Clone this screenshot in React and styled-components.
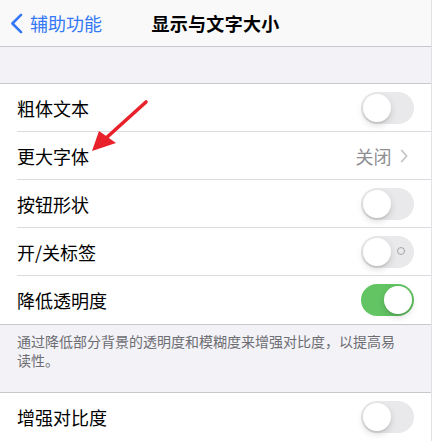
import React from "react";
import styled, { createGlobalStyle } from "styled-components";

const GlobalStyle = createGlobalStyle`
  html, body {
    margin: 0;
    padding: 0;
    background: #ffffff;
  }
  body {
    font-family: "Noto Sans CJK SC", "Noto Sans", "Liberation Sans", sans-serif;
    -webkit-font-smoothing: antialiased;
  }
`;

const rows = [
  { label: "粗体文本", type: "toggle", on: false },
  { label: "更大字体", type: "link", value: "关闭" },
  { label: "按钮形状", type: "toggle", on: false },
  { label: "开/关标签", type: "toggle", on: false, labels: true },
  { label: "降低透明度", type: "toggle", on: true },
];

const Chevron = ({ color = "#c4c4c7", size = 14 }) => (
  <svg width={size * 0.6} height={size} viewBox="0 0 8 14" fill="none">
    <path d="M1.5 1.5 L6.5 7 L1.5 12.5" stroke={color} strokeWidth="1.8" strokeLinecap="round" strokeLinejoin="round" />
  </svg>
);

const App = () => {
  return (
    <>
      <GlobalStyle />
      <Page>
        <NavBar>
          <BackButton>
            <svg width="13" height="21" viewBox="0 0 13 21" fill="none">
              <path d="M11 1.8 L2.4 10.5 L11 19.2" stroke="#3478f6" strokeWidth="2.6" strokeLinecap="round" strokeLinejoin="round" />
            </svg>
            <span>辅助功能</span>
          </BackButton>
          <Title>显示与文字大小</Title>
        </NavBar>

        <Gap />

        <Section>
          {rows.map((row, i) => (
            <Row key={row.label} last={i === rows.length - 1}>
              <Label>{row.label}</Label>
              {row.type === "toggle" ? (
                <Switch on={row.on}>
                  {row.labels && !row.on && <OffMark />}
                  <Knob on={row.on} />
                </Switch>
              ) : (
                <Detail>
                  <span>{row.value}</span>
                  <Chevron />
                </Detail>
              )}
            </Row>
          ))}
          <Arrow width="64" height="60" viewBox="0 0 64 60">
            <line x1="58" y1="4" x2="17" y2="41" stroke="#e8212a" strokeWidth="3.6" strokeLinecap="round" />
            <polygon points="4,53 11,33 28,45" fill="#e8212a" />
          </Arrow>
        </Section>

        <Footer>通过降低部分背景的透明度和模糊度来增强对比度，以提高易读性。</Footer>

        <Section>
          <Row last>
            <Label>增强对比度</Label>
            <Switch on={false}>
              <Knob on={false} />
            </Switch>
          </Row>
        </Section>
      </Page>
    </>
  );
};

// Styled components
const Page = styled.div`
  width: 431px;
  height: 441px;
  overflow: hidden;
  background: #f2f2f7;
  border-right: 1px solid #e2e2e6;
`;

const NavBar = styled.div`
  height: 46px;
  position: relative;
  display: flex;
  align-items: center;
  justify-content: center;
  background: #f9f9f9;
  border-bottom: 1px solid #c8c8cc;
`;

const BackButton = styled.div`
  position: absolute;
  left: 10px;
  top: 0;
  bottom: 0;
  display: flex;
  align-items: center;
  gap: 7px;
  color: #3478f6;
  font-size: 18px;
`;

const Title = styled.div`
  font-size: 18px;
  font-weight: 600;
  color: #000;
  letter-spacing: 0.3px;
`;

const Gap = styled.div`
  height: 36px;
  border-bottom: 1px solid #c8c8cc;
`;

const Section = styled.div`
  position: relative;
  background: #ffffff;
  border-bottom: 1px solid #c8c8cc;
`;

const Row = styled.div`
  height: 48px;
  margin-left: 17px;
  padding-right: 17px;
  display: flex;
  align-items: center;
  justify-content: space-between;
  box-sizing: border-box;
  border-bottom: ${(p) => (p.last ? "none" : "1px solid #dcdce0")};
`;

const Label = styled.div`
  font-size: 18px;
  color: #000;
`;

const Detail = styled.div`
  display: flex;
  align-items: center;
  gap: 8px;
  color: #8e8e93;
  font-size: 18px;
  padding-right: 6px;
`;

const Switch = styled.div`
  position: relative;
  width: 53px;
  height: 32px;
  border-radius: 16px;
  background: ${(p) => (p.on ? "#62c462" : "#e9e9eb")};
  flex-shrink: 0;
`;

const Knob = styled.div`
  position: absolute;
  top: 2px;
  left: ${(p) => (p.on ? "23px" : "2px")};
  width: 28px;
  height: 28px;
  border-radius: 50%;
  background: #ffffff;
  box-shadow: 0 3px 7px rgba(0, 0, 0, 0.15), 0 2px 1px rgba(0, 0, 0, 0.06);
`;

const OffMark = styled.div`
  position: absolute;
  right: 9px;
  top: 11px;
  width: 8px;
  height: 8px;
  box-sizing: border-box;
  border-radius: 50%;
  border: 1.3px solid #a5a5aa;
`;

const Arrow = styled.svg`
  position: absolute;
  left: 88px;
  top: 14px;
  pointer-events: none;
`;

const Footer = styled.div`
  height: 68px;
  box-sizing: border-box;
  padding: 7px 30px 0 17px;
  color: #6d6d72;
  font-size: 14px;
  line-height: 19px;
  border-bottom: 1px solid #c8c8cc;
`;

export default App;
